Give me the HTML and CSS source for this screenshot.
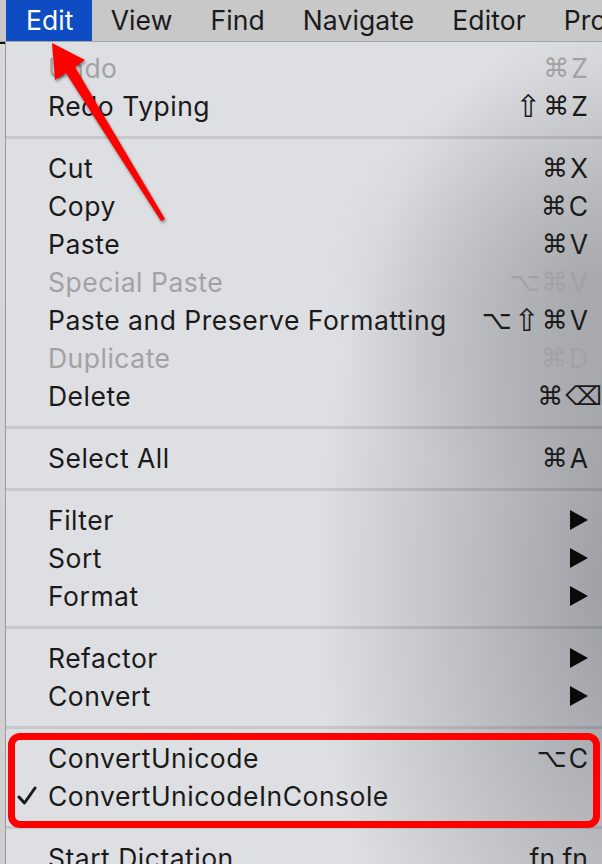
FILE: index.html
```html
<!DOCTYPE html>
<html>
<head>
<meta charset="utf-8">
<link rel="stylesheet" href="styles.css">
</head>
<body>
<div class="screen">
  <div class="menubar">
    <span class="mb-item active">Edit</span>
    <span class="mb-item">View</span>
    <span class="mb-item">Find</span>
    <span class="mb-item">Navigate</span>
    <span class="mb-item">Editor</span>
    <span class="mb-item">Product</span>
  </div>
  <div class="below">
    <div class="strip"></div>
    <div class="menu">
      <div class="item disabled"><span class="chk"></span><span class="label">Undo</span><span class="key"><span class="k">⌘</span>Z</span></div>
      <div class="item"><span class="chk"></span><span class="label">Redo Typing</span><span class="key"><span class="k sh">⇧</span><span class="k">⌘</span>Z</span></div>
      <div class="sep"></div>
      <div class="item"><span class="chk"></span><span class="label">Cut</span><span class="key"><span class="k">⌘</span>X</span></div>
      <div class="item"><span class="chk"></span><span class="label">Copy</span><span class="key"><span class="k">⌘</span>C</span></div>
      <div class="item"><span class="chk"></span><span class="label">Paste</span><span class="key"><span class="k">⌘</span>V</span></div>
      <div class="item disabled"><span class="chk"></span><span class="label">Special Paste</span><span class="key"><span class="k">⌥</span><span class="k">⌘</span>V</span></div>
      <div class="item"><span class="chk"></span><span class="label">Paste and Preserve Formatting</span><span class="key"><span class="k">⌥</span><span class="k sh">⇧</span><span class="k">⌘</span>V</span></div>
      <div class="item disabled"><span class="chk"></span><span class="label">Duplicate</span><span class="key"><span class="k">⌘</span>D</span></div>
      <div class="item"><span class="chk"></span><span class="label">Delete</span><span class="key del"><span class="k">⌘</span><span class="k bs">⌫</span></span></div>
      <div class="sep"></div>
      <div class="item"><span class="chk"></span><span class="label">Select All</span><span class="key"><span class="k">⌘</span>A</span></div>
      <div class="sep"></div>
      <div class="item"><span class="chk"></span><span class="label">Filter</span><span class="key sub"><svg class="tri" viewBox="0 0 18 20"><polygon points="0,0 18,10 0,20"/></svg></span></div>
      <div class="item"><span class="chk"></span><span class="label">Sort</span><span class="key sub"><svg class="tri" viewBox="0 0 18 20"><polygon points="0,0 18,10 0,20"/></svg></span></div>
      <div class="item"><span class="chk"></span><span class="label">Format</span><span class="key sub"><svg class="tri" viewBox="0 0 18 20"><polygon points="0,0 18,10 0,20"/></svg></span></div>
      <div class="sep"></div>
      <div class="item"><span class="chk"></span><span class="label">Refactor</span><span class="key sub"><svg class="tri" viewBox="0 0 18 20"><polygon points="0,0 18,10 0,20"/></svg></span></div>
      <div class="item"><span class="chk"></span><span class="label">Convert</span><span class="key sub"><svg class="tri" viewBox="0 0 18 20"><polygon points="0,0 18,10 0,20"/></svg></span></div>
      <div class="sep"></div>
      <div class="item"><span class="chk"></span><span class="label">ConvertUnicode</span><span class="key"><span class="k">⌥</span>C</span></div>
      <div class="item"><span class="chk"><svg class="check" viewBox="0 0 20 20"><path d="M2 11 L7.5 17 L18 2"/></svg></span><span class="label">ConvertUnicodeInConsole</span><span class="key"></span></div>
      <div class="sep"></div>
      <div class="item"><span class="chk"></span><span class="label">Start Dictation</span><span class="key fn">fn fn</span></div>
    </div>
  </div>
  <div class="highlight-box"></div>
  <svg class="arrow" viewBox="0 0 602 864" width="602" height="864">
    <polygon points="52,43 85,60 75,67 165,219 161,221 66,73 55,80" />
  </svg>
</div>
</body>
</html>
```

FILE: styles.css
```css
html, body {
  margin: 0;
  padding: 0;
}
body {
  width: 602px;
  height: 864px;
  overflow: hidden;
  font-family: Inter, "Liberation Sans", "DejaVu Sans", sans-serif;
  color: #1a1a1a;
}
.screen {
  position: relative;
  width: 602px;
  height: 864px;
  overflow: hidden;
}
.menubar {
  display: flex;
  height: 41px;
  align-items: center;
  padding-left: 6px;
  background: #c8c8c8;
  border-bottom: 1px solid #a4a4a4;
  font-size: 26.5px;
  letter-spacing: 0.1px;
  white-space: nowrap;
}
.mb-item {
  height: 41px;
  line-height: 41px;
  padding: 0 19px;
  color: #1a1a1a;
}
.mb-item.active {
  background: #0d4cc3;
  color: #fff;
  padding: 0 18px 0 20px;
}
.below {
  display: flex;
  height: 822px;
}
.strip {
  width: 5px;
  background: linear-gradient(#d9d9d9, #cfcfcf);
  border-top: 2px solid #111;
  box-sizing: border-box;
}
.menu {
  flex: 1;
  border-left: 1px solid #9a9a9a;
  padding-top: 7px;
  background:
    radial-gradient(ellipse 340px 600px at 650px 540px, rgba(108,112,120,0.66), rgba(108,112,120,0) 100%),
    radial-gradient(ellipse 260px 220px at 580px 240px, rgba(120,120,120,0.28), rgba(120,120,120,0) 100%),
    #dedfe2;
  font-size: 26.5px;
  letter-spacing: 0.5px;
}
.item {
  display: grid;
  grid-template-columns: 42px 1fr auto;
  align-items: center;
  height: 38px;
  padding-right: 14px;
  white-space: nowrap;
}
.item.disabled {
  color: #a2a2a4;
}
.chk {
  display: flex;
  align-items: center;
  padding-left: 11px;
}
.check {
  width: 20px;
  height: 20px;
  fill: none;
  stroke: #1a1a1a;
  stroke-width: 3;
  stroke-linecap: round;
  stroke-linejoin: round;
}
.key {
  display: flex;
  align-items: center;
  letter-spacing: 0;
}
.k {
  font-family: "DejaVu Sans", sans-serif;
  font-size: 26px;
  margin-right: 2px;
}
.k.sh {
  font-size: 31px;
}
.key.del {
  margin-right: -14px;
}
.k.bs {
  margin-right: 0;
}
.tri {
  width: 18px;
  height: 20px;
  fill: #0a0a0a;
}
.sep {
  height: 24px;
  display: flex;
  align-items: center;
}
.sep::after {
  content: "";
  flex: 1;
  height: 3px;
  background: rgba(0, 0, 0, 0.1);
}
.highlight-box {
  position: absolute;
  left: 8px;
  top: 733px;
  width: 592px;
  height: 95px;
  box-sizing: border-box;
  border: 7px solid #ff0000;
  border-radius: 12px;
}
.arrow {
  position: absolute;
  left: 0;
  top: 0;
  fill: #ff0000;
  filter: drop-shadow(1px 2px 1.5px rgba(0,0,0,0.45));
}
```
